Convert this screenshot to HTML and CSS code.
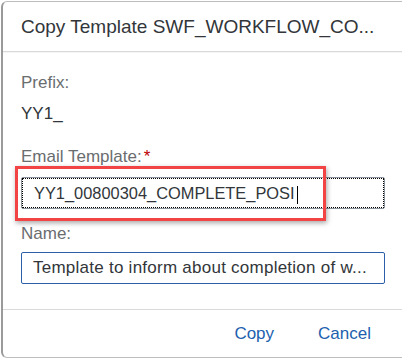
FILE: index.html
```html
<!DOCTYPE html>
<html lang="en">
<head>
    <meta charset="UTF-8">
    <title>Copy Template</title>
    <link rel="stylesheet" href="styles.css">
</head>
<body>
    <div class="dialog">
        <header class="dialog-header">
            <h1 class="dialog-title">Copy Template SWF_WORKFLOW_CO...</h1>
        </header>
        <main class="dialog-content">
            <div class="field">
                <label class="field-label">Prefix:</label>
                <div class="field-text">YY1_</div>
            </div>
            <div class="field">
                <label class="field-label">Email Template:<span class="required">*</span></label>
                <div class="highlight-wrap">
                    <div class="input input-focus">YY1_00800304_COMPLETE_POSI<span class="caret"></span></div>
                    <div class="highlight"></div>
                </div>
            </div>
            <div class="field field-name">
                <label class="field-label">Name:</label>
                <div class="input input-blue">Template to inform about completion of w...</div>
            </div>
        </main>
        <footer class="dialog-footer">
            <button class="btn">Copy</button>
            <button class="btn">Cancel</button>
        </footer>
    </div>
</body>
</html>
```

FILE: styles.css
```css
body {
    margin: 0;
    padding: 0;
    background: #ffffff;
    font-family: "Liberation Sans", Arial, sans-serif;
    color: #32363a;
    overflow: hidden;
}

.dialog {
    margin: 1px 0 0 1px;
    width: 401px;
    height: 357px;
    box-sizing: border-box;
    border: 1px solid #bdbdbd;
    border-right: none;
    border-left: 2px solid #9a9a9a;
    border-radius: 6px 0 0 6px;
    background: #ffffff;
    display: flex;
    flex-direction: column;
}

.dialog-header {
    height: 49px;
    flex: none;
    border-bottom: 1px solid #d9d9d9;
    display: flex;
    align-items: center;
    padding-left: 18px;
    box-shadow: 0 1px 1px rgba(0, 0, 0, 0.04);
}

.dialog-title {
    margin: 0;
    font-size: 19px;
    line-height: 22px;
    font-weight: normal;
    color: #32363a;
}

.dialog-content {
    padding: 21px 0 0 18px;
    flex: 1;
}

.field-label {
    display: block;
    font-size: 17px;
    line-height: 20px;
    color: #6a6d70;
}

.required {
    color: #bb0000;
    margin-left: 2px;
}

.field-text {
    font-size: 17px;
    line-height: 20px;
    margin-top: 11px;
    margin-bottom: 23px;
}

.highlight-wrap {
    position: relative;
    margin-top: 10px;
}

.input {
    width: 364px;
    height: 32px;
    box-sizing: border-box;
    border: 1px solid #89919a;
    border-radius: 2px;
    font-size: 17px;
    line-height: 30px;
    padding-left: 11px;
    white-space: nowrap;
    overflow: hidden;
}

.input-focus {
    font-size: 16.4px;
    padding-left: 12px;
    outline: 1px dotted #000000;
    outline-offset: -2px;
}

.caret {
    display: inline-block;
    width: 1px;
    height: 18px;
    background: #000000;
    vertical-align: middle;
    margin-left: 2px;
}

.field-name {
    margin-top: 15px;
}

.input-blue {
    border-color: #2c5fa8;
    margin-top: 8px;
    letter-spacing: 0.25px;
}

.highlight {
    position: absolute;
    left: -6px;
    top: -11px;
    width: 305px;
    height: 49px;
    border: 3px solid #f24444;
    box-shadow: 1px 2px 5px rgba(0, 0, 0, 0.35);
}

.dialog-footer {
    height: 47px;
    flex: none;
    border-top: 1px solid #d9d9d9;
    display: flex;
    justify-content: flex-end;
    align-items: center;
    padding-right: 19px;
    gap: 20px;
}

.btn {
    font-family: inherit;
    font-size: 17px;
    line-height: 20px;
    color: #1d5fae;
    background: none;
    border: none;
    padding: 6px 12px;
    cursor: pointer;
}
```
